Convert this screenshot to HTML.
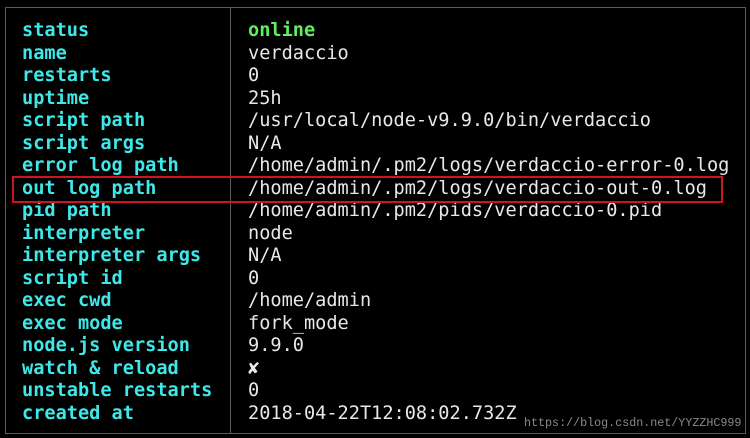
<!DOCTYPE html><html><head><style>
body{margin:0;width:750px;height:438px;background:#000;position:relative;overflow:hidden;font-family:"DejaVu Sans Mono","Liberation Mono",monospace;font-size:18.6px}
.frame{position:absolute;left:5px;top:7px;width:741px;height:427px;border:1px solid #5a5a5a;box-sizing:border-box}
.div{position:absolute;left:230px;top:7px;width:1px;height:427px;background:#5a5a5a}
.row{position:absolute;left:0;height:22.5px;line-height:22.5px;white-space:pre}
.k{position:absolute;left:22px;color:#3fe8e8;font-weight:bold}
.v{position:absolute;left:248px;color:#e8e8e8}
.red{position:absolute;left:12px;top:176px;width:711px;height:27px;border:2px solid #d0141c;box-sizing:border-box}
.wm{position:absolute;left:524px;top:416px;font-family:"Liberation Mono",monospace;font-size:11.7px;color:#8a8a8a}
</style></head><body>
<div class="frame"></div><div class="div"></div>
<div class="row" style="top:20px"><span class="k">status</span><span class="v" style="color:#5ef05e;font-weight:bold">online</span></div>
<div class="row" style="top:42.5px"><span class="k">name</span><span class="v">verdaccio</span></div>
<div class="row" style="top:65px"><span class="k">restarts</span><span class="v">0</span></div>
<div class="row" style="top:87.5px"><span class="k">uptime</span><span class="v">25h</span></div>
<div class="row" style="top:110px"><span class="k">script path</span><span class="v">/usr/local/node-v9.9.0/bin/verdaccio</span></div>
<div class="row" style="top:132.5px"><span class="k">script args</span><span class="v">N/A</span></div>
<div class="row" style="top:155px"><span class="k">error log path</span><span class="v">/home/admin/.pm2/logs/verdaccio-error-0.log</span></div>
<div class="row" style="top:177.5px"><span class="k">out log path</span><span class="v">/home/admin/.pm2/logs/verdaccio-out-0.log</span></div>
<div class="row" style="top:200px"><span class="k">pid path</span><span class="v">/home/admin/.pm2/pids/verdaccio-0.pid</span></div>
<div class="row" style="top:222.5px"><span class="k">interpreter</span><span class="v">node</span></div>
<div class="row" style="top:245px"><span class="k">interpreter args</span><span class="v">N/A</span></div>
<div class="row" style="top:267.5px"><span class="k">script id</span><span class="v">0</span></div>
<div class="row" style="top:290px"><span class="k">exec cwd</span><span class="v">/home/admin</span></div>
<div class="row" style="top:312.5px"><span class="k">exec mode</span><span class="v">fork_mode</span></div>
<div class="row" style="top:335px"><span class="k">node.js version</span><span class="v">9.9.0</span></div>
<div class="row" style="top:357.5px"><span class="k">watch &amp; reload</span><span class="v">✘</span></div>
<div class="row" style="top:380px"><span class="k">unstable restarts</span><span class="v">0</span></div>
<div class="row" style="top:402.5px"><span class="k">created at</span><span class="v">2018-04-22T12:08:02.732Z</span></div>
<div class="red"></div>
<div class="wm">https://blog.csdn.net/YYZZHC999</div>
</body></html>
